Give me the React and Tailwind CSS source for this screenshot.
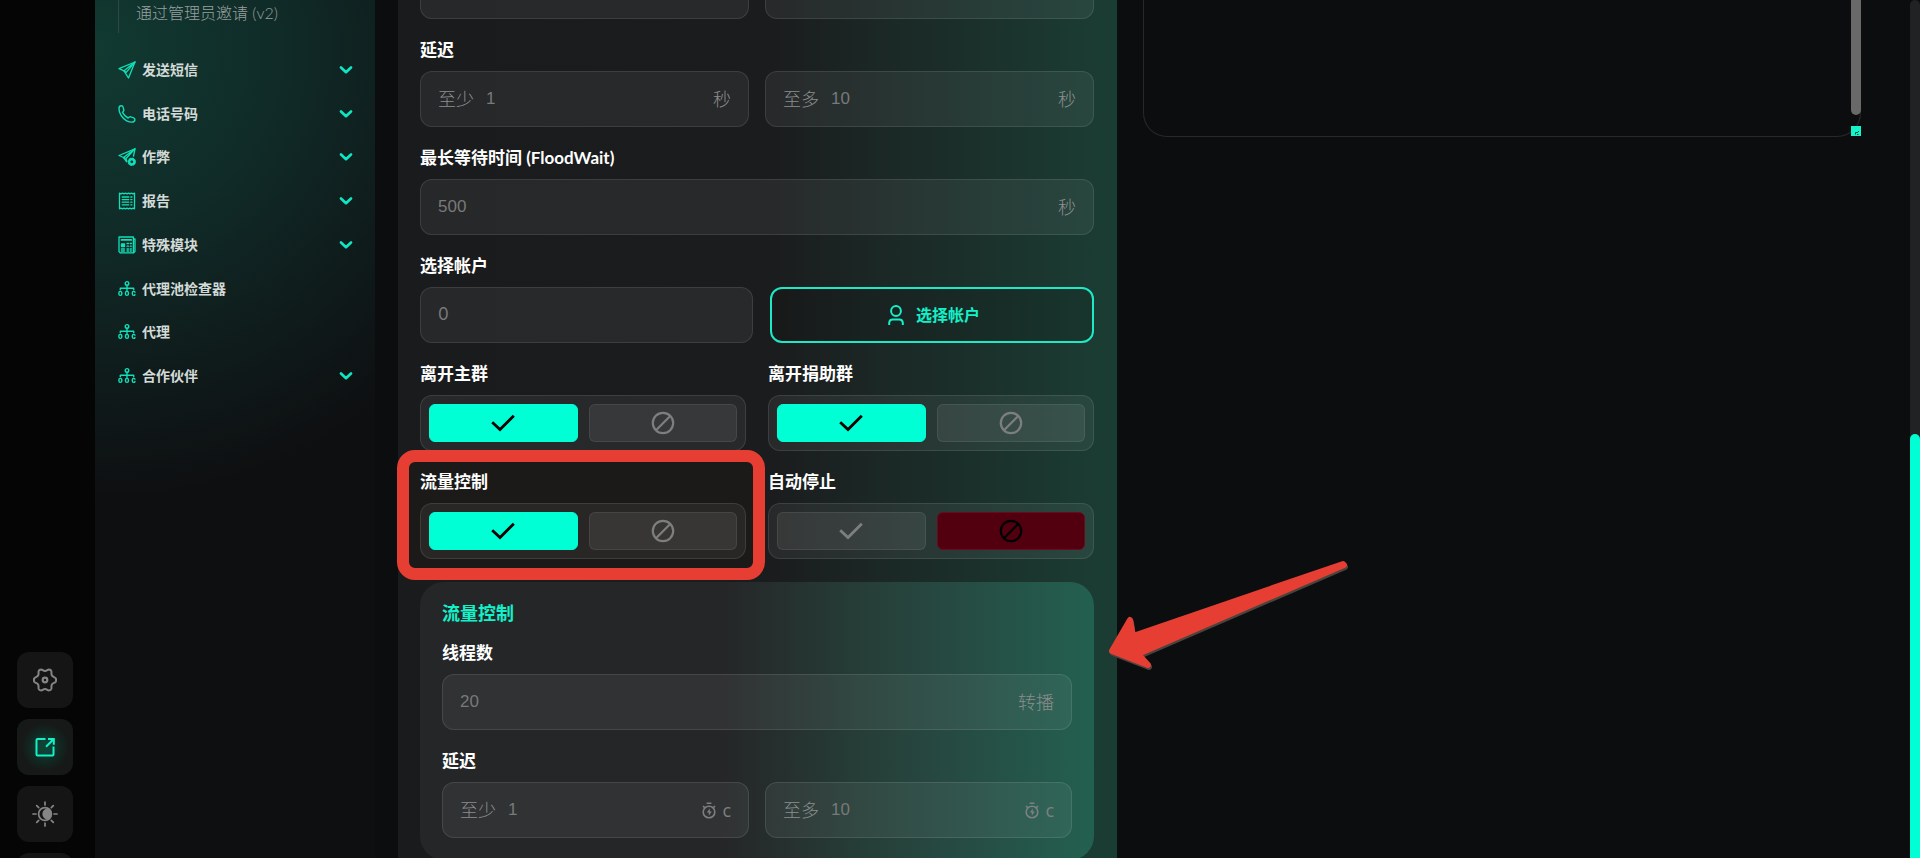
import React from "react";

const stroke = {
  fill: "none",
  stroke: "currentColor",
  strokeLinecap: "round",
  strokeLinejoin: "round",
};

function PlaneIcon() {
  return (
    <svg viewBox="0 0 18 18" className="size-[18px]" strokeWidth="1.3" {...stroke}>
      <path d="M17 1 1 7.6l5 2.2L10.5 17z" />
      <path d="M17 1 6 9.8M17 1 8.200 11.400M6 9.800l2.200 1.600" />
    </svg>
  );
}

function PhoneIcon() {
  return (
    <svg viewBox="0 0 18 18" className="size-[18px]" strokeWidth="1.4" {...stroke}>
      <path d="M1 3.2C1 1.6 2.4.8 3.4.8c.8 0 1.5.5 1.7 1.400l.7 2.600c.1.6 0 1-.4 1.400l-.9 1.200c1.200 2.400 3 4.300 5.600 5.600l1.300-1c.4-.3.9-.4 1.400-.2l2.800 1c.8.3 1.400.9 1.300 1.800-.1 1.400-1.400 2.500-3 2.500C7 17.100 1 10 1 3.200z" />
    </svg>
  );
}

function PlaneGearIcon() {
  return (
    <svg viewBox="0 0 18 18" className="size-[18px]" strokeWidth="1.3" {...stroke}>
      <path d="M15.500 8 17 .8 1 7.500l4.500 2L8.500 13.500" />
      <path d="M17 .8 5.500 9.500M17 .8 8 10.500l.7 3M5.500 9.500 8 10.500" />
      <circle cx="13.800" cy="13.800" r="2.600" strokeWidth="2.400" />
      <circle cx="13.800" cy="13.800" r="3.800" strokeWidth="0.800" strokeDasharray="1.500 1.500" />
    </svg>
  );
}

function ReportIcon() {
  return (
    <svg viewBox="0 0 18 18" className="size-[18px]" strokeWidth="1.300" {...stroke}>
      <path d="M1.500 1.200l1.500.6 1.500-.6 1.500.6 1.500-.6 1.500.6 1.500-.6 1.500.6 1.500-.6 1.500.6 1.500-.6v15.600l-1.500-.6-1.500.6-1.500-.6-1.500.6-1.500-.6-1.500.6-1.500-.6-1.500.6-1.500-.6-1.500.6z" />
      <path d="M4.200 5h6.600M4.200 7.600h6.600M4.200 10.200h6.600M4.200 12.800h6.600M12.800 5h1.200M12.800 7.600h1.200M12.800 10.200h1.200M12.800 12.800h1.200" />
    </svg>
  );
}

function ModulesIcon() {
  return (
    <svg viewBox="0 0 18 18" className="size-[18px]" strokeWidth="1.300" {...stroke}>
      <path d="M1 1h14.400v15.800H2.200L1 15.600zM15.400 3H17v12.400l-1.300 1.400" />
      <path d="M3.400 3.900h9.800" strokeWidth="1.800" />
      <path d="M3.500 8h3v2.500h-3z" fill="currentColor" />
      <path d="M9 7.500h1.500M12.200 7.500h1.200M9 10.200h1.500M12.200 10.200h1.200M3.400 13h3M9 13h1.500M12.200 13h1.200M3.400 15h3M9 15h1.500M12.200 15h1.200" />
    </svg>
  );
}

function TreeIcon() {
  return (
    <svg viewBox="0 0 18 18" className="size-[18px]" strokeWidth="1.400" {...stroke}>
      <circle cx="9" cy="3.400" r="1.800" />
      <path d="M9 5.200v5.300M2.300 9.800V8.200h13.400v1.600" />
      <rect x="0.900" y="11.400" width="2.900" height="4" rx="1.400" />
      <rect x="7.500" y="11.400" width="2.900" height="4" rx="1.400" />
      <path d="M17 12.200c-.3-.6-.8-.8-1.300-.8-.8 0-1.400.6-1.400 1.400v1.200c0 .8.600 1.400 1.400 1.400.5 0 1-.2 1.300-.8" />
    </svg>
  );
}

function Chevron() {
  return (
    <svg viewBox="0 0 14 8" className="h-2 w-[14px] text-[#0de8c4]" strokeWidth="2.600" {...stroke}>
      <path d="M2 1.500 7 6.200l5-4.700" />
    </svg>
  );
}

function CheckIcon() {
  return (
    <svg viewBox="0 0 24 18" className="h-[18px] w-6" fill="none" stroke="currentColor" strokeWidth="2.800">
      <path d="M1.200 8.200 9 15.500 22.800 1.800" />
    </svg>
  );
}

function BanIcon() {
  return (
    <svg viewBox="0 0 24 24" className="size-6" fill="none" stroke="currentColor" strokeWidth="2.200">
      <circle cx="12" cy="12" r="10.200" />
      <path d="M5 19.200 19.200 5" />
    </svg>
  );
}

function UserIcon() {
  return (
    <svg viewBox="0 0 16 20" className="h-5 w-4" fill="none" stroke="currentColor" strokeWidth="2">
      <circle cx="8" cy="6" r="4.900" />
      <path d="M1.200 20v-2.200a3.600 3.600 0 0 1 3.600-3.400h6.400a3.600 3.600 0 0 1 3.600 3.400V20" />
    </svg>
  );
}

function TimerIcon() {
  return (
    <svg viewBox="0 0 14 17" className="h-[17px] w-[14px]" fill="none" stroke="currentColor" strokeWidth="1.600">
      <circle cx="7" cy="10" r="5.800" />
      <path d="M4.600 1.200h4.800M1 4.200l1.800 1.400M13 4.200l-1.800 1.400" />
      <path d="M7.800 6.500 4.800 10.600h2v3.200l3-4.300h-2z" fill="currentColor" stroke="none" />
    </svg>
  );
}

function GearIcon() {
  return (
    <svg viewBox="0 0 24 24" className="size-6" strokeWidth="2" {...stroke}>
      <path d="M8.200 1.600c1.400.1 1.800 1.300 3.800 1.300s2.400-1.200 3.800-1.300c1.200 0 2.300.7 2.600 1.700.3 1.300-.4 2.300.5 4.200.8 1.600 3.400 1.600 3.900 2.900.3.900.3 2.300 0 3.200-.5 1.300-3.100 1.300-3.900 2.900-.9 1.900-.2 2.900-.5 4.200-.3 1-1.400 1.700-2.600 1.700-1.400-.1-1.800-1.300-3.800-1.300s-2.400 1.200-3.800 1.300c-1.200 0-2.300-.7-2.600-1.700-.3-1.300.4-2.300-.5-4.200-.8-1.600-3.400-1.600-3.900-2.900-.3-.9-.3-2.300 0-3.200.5-1.300 3.100-1.300 3.900-2.900.9-1.900.2-2.900.5-4.200.3-1 1.400-1.700 2.600-1.700z" />
      <circle cx="12" cy="12" r="2.300" strokeWidth="2.200" />
    </svg>
  );
}

function OpenIcon() {
  return (
    <svg viewBox="0 0 20 20" className="size-5" fill="none" stroke="currentColor" strokeWidth="2">
      <path d="M10.500 2H2.500a1 1 0 0 0-1 1v14.500a1 1 0 0 0 1 1h15a1 1 0 0 0 1-1V9.500" />
      <path d="M11 9.800 18 2.800M13 2h5.800v5.800" />
    </svg>
  );
}

function SunIcon() {
  return (
    <svg viewBox="0 0 26 26" className="size-[26px]" strokeWidth="1.700" {...stroke}>
      <circle cx="13" cy="13" r="6.400" />
      <path d="M16 8.200a5.400 5.400 0 0 1 0 9.600 4.800 4.800 0 0 1 0-9.600z" fill="currentColor" />
      <path d="M13 1v3M13 22v3M1 13h3M22 13h3M4.700 4.700l2 2M19.300 19.300l2 2M4.700 21.300l2-2M19.300 6.700l2-2" />
    </svg>
  );
}

const menu = [
  { text: "发送短信", Icon: PlaneIcon, open: true },
  { text: "电话号码", Icon: PhoneIcon, open: true },
  { text: "作弊", Icon: PlaneGearIcon, open: true },
  { text: "报告", Icon: ReportIcon, open: true },
  { text: "特殊模块", Icon: ModulesIcon, open: true },
  { text: "代理池检查器", Icon: TreeIcon, open: false },
  { text: "代理", Icon: TreeIcon, open: false },
  { text: "合作伙伴", Icon: TreeIcon, open: true },
];

function Rail() {
  const button =
    "flex size-14 shrink-0 items-center justify-center rounded-xl bg-[#151515] text-[#858585]";
  return (
    <nav aria-label="工具" className="flex h-screen w-[95px] shrink-0 flex-col justify-end overflow-hidden bg-[#050505] pl-[17px]">
      <div className="-mb-[51px] flex flex-col gap-[11px]">
        <button aria-label="设置" className={button}><GearIcon /></button>
        <button aria-label="打开" className="flex size-14 shrink-0 items-center justify-center rounded-xl bg-[radial-gradient(circle,#0d4235_15%,#112a23_35%,#161918_60%)] text-[#14f0c8]">
          <OpenIcon />
        </button>
        <button aria-label="主题" className={button}><SunIcon /></button>
        <button aria-label="更多" className={button} />
      </div>
    </nav>
  );
}

function Sidebar() {
  return (
    <aside className="h-screen w-[280px] shrink-0 overflow-hidden bg-[#0e0f11] bg-[radial-gradient(ellipse_460px_450px_at_0px_50px,#113a31_0%,#102b28_40%,#0f1a1a_75%,#0e0f11_100%)] pl-[23px] pr-[22px]">
      <div className="h-[33px] border-l border-[#2a4a43] pl-[17px]">
        <a href="#invite" className="block text-base leading-[26px] font-light text-[#98a09f]">
          通过管理员邀请 (v2)
        </a>
      </div>
      <ul className="mt-[15px] flex h-[350px] flex-col">
        {menu.map(({ text, Icon, open }) => (
          <li key={text} className="flex-1">
            <a href="#menu" className="flex h-full items-center text-sm font-bold text-[#d3dad8]">
              <span className="mr-[6px] text-[#0fe0b8]"><Icon /></span>
              <span className="grow">{text}</span>
              {open && <Chevron />}
            </a>
          </li>
        ))}
      </ul>
    </aside>
  );
}

function Label({ htmlFor, children }) {
  return (
    <label htmlFor={htmlFor} className="mb-[9px] block h-6 text-[17px] leading-6 font-bold text-white">
      {children}
    </label>
  );
}

function Field({ id, prefix, name, placeholder, unit, font = "font-['Liberation_Sans',sans-serif]" }) {
  return (
    <div className="flex h-14 min-w-0 flex-1 items-center rounded-xl border border-white/10 bg-white/6 px-[17px] text-[17px] font-light text-[#8b8e8e]">
      {prefix && <label htmlFor={id} className="mr-3 shrink-0 text-lg">{prefix}</label>}
      <input
        id={id}
        aria-label={name}
        placeholder={placeholder}
        className={`w-full min-w-0 grow bg-transparent font-normal outline-none placeholder:text-[#777a7a] ${font}`}
      />
      {unit && <span className="shrink-0 text-lg">{unit}</span>}
    </div>
  );
}

function Toggle({ label, value, marked }) {
  const base = "flex h-[38px] flex-1 items-center justify-center rounded-md border";
  const off = "border-white/8 bg-white/7 text-[#7d7f7f]";
  return (
    <div className="relative flex-1">
      {marked && (
        <div className="pointer-events-none absolute -top-[20px] -right-[19px] -bottom-[21px] -left-[23px] rounded-[18px] border-12 border-[#e63e33] bg-[#1b1a18]" />
      )}
      <h3 className="relative mb-[9px] h-6 text-[17px] leading-6 font-bold text-white">{label}</h3>
      <div role="group" aria-label={label} className="relative flex h-14 items-center gap-[11px] rounded-xl border border-white/10 bg-white/6 px-2">
        <button aria-label="是" aria-pressed={value} className={`${base} ${value ? "border-[#00ffd5] bg-[#00ffd5] text-black" : off}`}>
          <CheckIcon />
        </button>
        <button aria-label="否" aria-pressed={!value} className={`${base} ${value ? off : "border-[#6b0a1c] bg-[#52000f] text-black"}`}>
          <BanIcon />
        </button>
      </div>
    </div>
  );
}

const timer = (
  <span className="flex items-center gap-[6px] font-['Open_Sans',sans-serif] font-normal text-[#7d8080]">
    <TimerIcon /> c
  </span>
);

function Settings() {
  return (
    <main className="relative -mt-[37px] ml-[23px] min-h-screen w-[719px] shrink-0 bg-[linear-gradient(90deg,#1a1b1d_0%,#1b1c1d_52%,#1b2725_66%,#1b312c_82%,#1b3c33_97%)] pr-[23px] pb-8 pl-[22px]">
      <div className="flex flex-col gap-[19px]">
        <div className="flex gap-4">
          <Field name="至少" />
          <Field name="至多" />
        </div>
        <div>
          <Label htmlFor="delay-min">延迟</Label>
          <div className="flex gap-4">
            <Field id="delay-min" prefix="至少" placeholder="1" unit="秒" />
            <Field id="delay-max" prefix="至多" placeholder="10" unit="秒" />
          </div>
        </div>
        <div>
          <Label htmlFor="flood">最长等待时间 (FloodWait)</Label>
          <Field id="flood" placeholder="500" unit="秒" />
        </div>
        <div>
          <Label htmlFor="accounts">选择帐户</Label>
          <div className="flex gap-[17px]">
            <Field id="accounts" placeholder="0" font="font-[Inter,sans-serif]" />
            <button className="flex h-14 w-[324px] items-center justify-center gap-3 rounded-xl border-2 border-[#1fe9c4] bg-black/10 pl-1 text-base font-bold text-[#14f0c8]">
              <UserIcon />
              选择帐户
            </button>
          </div>
        </div>
        <div className="flex gap-[22px]">
          <Toggle label="离开主群" value={true} />
          <Toggle label="离开捐助群" value={true} />
        </div>
        <div className="flex gap-[22px]">
          <Toggle label="流量控制" value={true} marked />
          <Toggle label="自动停止" value={false} />
        </div>
      </div>
      <section className="mt-[23px] rounded-3xl bg-[linear-gradient(90deg,#242628_0%,#252627_45%,#263d37_65%,#264e45_83%,#236050_100%)] px-[22px] pt-[19px] pb-[22px]">
        <h2 className="mb-4 h-6 text-lg leading-6 font-bold text-[#14f0c8]">流量控制</h2>
        <Label htmlFor="threads">线程数</Label>
        <Field id="threads" placeholder="20" unit="转播" />
        <div className="mt-[19px]">
          <Label htmlFor="flow-min">延迟</Label>
          <div className="flex gap-4">
            <Field id="flow-min" prefix="至少" placeholder="1" unit={timer} />
            <Field id="flow-max" prefix="至多" placeholder="10" unit={timer} />
          </div>
        </div>
      </section>
      <svg viewBox="0 0 250 120" className="pointer-events-none absolute top-[590px] left-[702px] h-[120px] w-[250px]">
        <g strokeWidth="6" strokeLinejoin="round">
          <path d="M13 100 31 69 33 85 244 13 245 14 39 103 49 114z" fill="#4a433e" stroke="#4a433e" />
          <path d="M12 98 30 67 33 83 243 11 244 12 38 101 48 112z" fill="#e63e33" stroke="#e63e33" />
        </g>
      </svg>
    </main>
  );
}

function Log() {
  return (
    <section className="relative ml-[26px] h-[137px] min-w-0 grow">
      <textarea
        aria-label="日志"
        readOnly
        className="block h-full w-full resize-none rounded-b-3xl border border-t-0 border-[#29292a] bg-[#0c0d0e] outline-none"
      />
      <div className="absolute top-0 right-0 h-[115px] w-[10px] rounded-b-full bg-[#69696a]" />
      <div className="absolute right-0 bottom-px size-[10px] bg-[#14f5cc]">
        <svg viewBox="0 0 10 10" className="size-[10px]" fill="none" stroke="#0a4a40" strokeWidth="1">
          <path d="M4.500 8.500V6.500h2.500M7.500 5v1M6 8.500h1.500" />
        </svg>
      </div>
    </section>
  );
}

export default function App() {
  return (
    <div className="flex h-screen overflow-hidden bg-[#0c0d0e] font-[Lato,'Liberation_Sans','Noto_Sans_CJK_SC',sans-serif]">
      <Rail />
      <Sidebar />
      <Settings />
      <Log />
      <div className="ml-[49px] flex h-screen w-[10px] shrink-0 flex-col justify-end rounded-t-full bg-[#202224]">
        <div className="h-[424px] rounded-t-full bg-[#00ffd5]" />
      </div>
    </div>
  );
}
